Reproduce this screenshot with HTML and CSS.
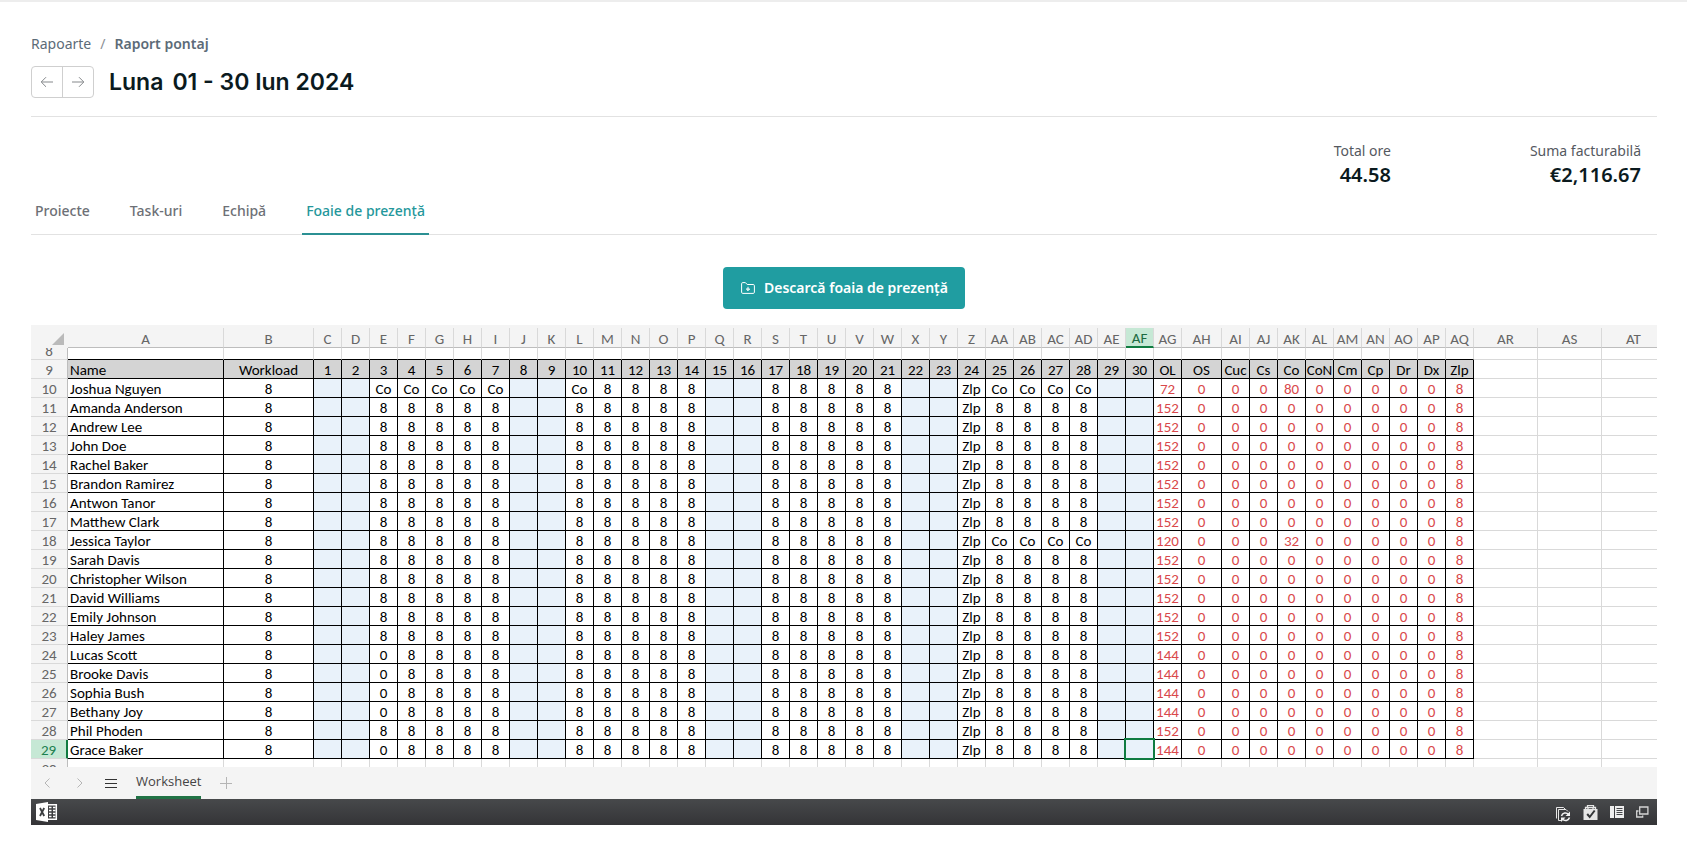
FILE: index.html
```html
<!DOCTYPE html>
<html lang="ro">
<head>
  <meta charset="utf-8">
  <meta name="viewport" content="width=device-width, initial-scale=1">
  <title>Raport pontaj</title>
  <link rel="stylesheet" href="styles.css">
</head>
<body>
  <main class="page">
    <header class="page-header">
      <nav class="breadcrumb" aria-label="Breadcrumb">
        <a href="#rapoarte">Rapoarte</a>
        <span class="breadcrumb-sep">/</span>
        <a class="breadcrumb-current" href="#pontaj">Raport pontaj</a>
      </nav>
      <div class="period">
        <div class="period-nav">
          <button type="button" aria-label="Luna precedentă">
            <svg width="14" height="12" viewBox="0 0 14 12"><path d="M13 6H1.5M6 1.2 1.2 6 6 10.8"/></svg>
          </button>
          <button type="button" aria-label="Luna următoare">
            <svg width="14" height="12" viewBox="0 0 14 12"><path d="M1 6h11.5M8 1.2 12.8 6 8 10.8"/></svg>
          </button>
        </div>
        <h1><span>Luna</span><span>01 - 30 Iun 2024</span></h1>
      </div>
    </header>

    <dl class="totals">
      <div class="total"><dt>Total ore</dt><dd>44.58</dd></div>
      <div class="total"><dt>Suma facturabilă</dt><dd>€2,116.67</dd></div>
    </dl>

    <nav class="tabs" aria-label="Secțiuni raport">
      <a href="#proiecte">Proiecte</a>
      <a href="#taskuri">Task-uri</a>
      <a href="#echipa">Echipă</a>
      <a class="active" href="#foaie" aria-current="page">Foaie de prezență</a>
    </nav>

    <div class="actions">
      <button type="button" class="download">
        <svg width="14" height="12" viewBox="0 0 14 12"><path d="M.6 10.2V1.8Q.6.6 1.8.6h2.6l1.8 1.9h6q1.2 0 1.2 1.2v6.5q0 1.2-1.2 1.2H1.8Q.6 11.400.6 10.200z"/><path d="M7 4.800v3.800M5.300 7 7 8.700 8.700 7z"/></svg>
        Descarcă foaia de prezență
      </button>
    </div>

    <section class="workbook" aria-label="Foaie de prezență">
      <div class="grid-view">
        <table class="sheet" id="sheet"></table>
      </div>
      <div class="sheet-bar">
        <button type="button" class="sheet-prev" aria-label="Foaia anterioară"><svg width="6" height="10" viewBox="0 0 6 10"><path d="M5.500.500 1 5l4.500 4.500"/></svg></button>
        <button type="button" class="sheet-next" aria-label="Foaia următoare"><svg width="6" height="10" viewBox="0 0 6 10"><path d="M.500.500 5 5 .500 9.500"/></svg></button>
        <button type="button" class="sheet-list" aria-label="Toate foile"><svg width="12" height="11" viewBox="0 0 12 11"><path d="M0 1.500h12M0 5.500h12M0 9.500h12"/></svg></button>
        <button type="button" class="sheet-tab">Worksheet</button>
        <button type="button" class="sheet-add" aria-label="Foaie nouă"><svg width="12" height="12" viewBox="0 0 12 12"><path d="M6.500 0v12M0 6.500h12"/></svg></button>
      </div>
      <footer class="status-bar">
        <a href="#excel" class="excel" aria-label="Excel">
          <svg width="22" height="20" viewBox="0 0 22 20"><path fill="#fff" d="M0 2 12 0v20L0 18z"/><path fill="none" stroke="#fff" stroke-width="1.500" d="M12 2.700h8.300v14.600H12"/><path stroke="#fff" stroke-width="1.500" d="M13 5.500h2.500m1.500 0h2.500M13 8.500h2.500m1.500 0h2.500M13 11.500h2.500m1.500 0h2.500M13 14.500h2.500m1.500 0h2.500"/><path fill="none" stroke="#3c3e40" stroke-width="1.800" d="m4 6 4.200 8M8.200 6 4 14"/></svg>
        </a>
        <div class="status-actions">
          <button type="button" aria-label="Actualizare"><svg width="15" height="19" viewBox="0 -4 15 19"><path fill="none" stroke="#e6e6e6" d="M.5 11.500V.500h7l2 2M5 13.500H2.500v-11h7.500l2 2"/><path fill="none" stroke="#f2f2f2" stroke-width="1.500" d="M5.500 9a4 4 0 0 1 7-1.500M13.500 10.500a4 4 0 0 1-7 1.500"/><path fill="#f2f2f2" d="M14 4.500V9H9.500zM5 15v-4.500h4.500z"/></svg></button>
          <button type="button" aria-label="Verificare"><svg width="15" height="15" viewBox="0 0 15 15"><path fill="#e6e6e6" d="M.5 4h14v11H.5z"/><path fill="none" stroke="#e6e6e6" stroke-width="1.300" d="M2.500 4V2.500h2V.7h6v1.800h2V4M5 4V2.700h5V4"/><path fill="none" stroke="#343638" stroke-width="2" d="m4.200 9 2.500 3 5-6.500"/></svg></button>
          <button type="button" aria-label="Panou"><svg width="14" height="12" viewBox="0 0 14 12"><path fill="#eee" d="M0 0h4v12H0zM5 0h9v12H5z"/><path stroke="#45474a" d="M6.500 2.500h6M6.500 4.500h6M6.500 6.500h6M6.500 8.500h6"/></svg></button>
          <button type="button" aria-label="Fereastră nouă"><svg width="13" height="12" viewBox="0 0 13 12"><path fill="none" stroke="#d5d5d5" stroke-width="1.300" d="M3.700 1h8.200v7H3.700zM2.500 5H.700v6h6V9.500"/></svg></button>
        </div>
      </footer>
    </section>
  </main>
  <script src="sheet.js"></script>
</body>
</html>
```

FILE: styles.css
```css
* {
  box-sizing: border-box;
}

body {
  margin: 0;
  border-top: 2px solid #ededed;
  background: #fff;
  color: #0b1a1e;
  font: 14px/20px "Noto Sans", sans-serif;
}

button {
  margin: 0;
  padding: 0;
  border: 0;
  background: none;
  color: inherit;
  font: inherit;
  cursor: pointer;
}

a {
  color: inherit;
  text-decoration: none;
}

svg {
  display: block;
}

.page {
  padding: 32px 30px 30px 31px;
}

.page-header {
  padding-bottom: 18px;
  border-bottom: 1px solid #e2e2e2;
}

.breadcrumb {
  display: flex;
  gap: 9px;
  color: #5c6b78;
}

.breadcrumb-sep {
  color: #8b8f94;
}

.breadcrumb-current {
  font-weight: 600;
}

.period {
  display: flex;
  align-items: center;
  gap: 15px;
  margin-top: 11px;
}

.period-nav {
  display: flex;
  width: 63px;
  border: 1px solid #cfcfcf;
  border-radius: 4px;
}

.period-nav button {
  display: grid;
  flex: 1;
  place-items: center;
  height: 30px;
}

.period-nav button + button {
  border-left: 1px solid #cfcfcf;
}

.period-nav svg {
  fill: none;
  stroke: #85888b;
}

h1 {
  display: flex;
  gap: 9px;
  margin: 0;
  padding-top: 1px;
  font: 600 23px/32px Inter, sans-serif;
}

.totals {
  display: flex;
  justify-content: flex-end;
  gap: 139px;
  margin: 24px 16px 0;
  text-align: right;
}

.totals dt {
  color: #55595f;
}

.totals dd {
  margin: 2px 0 0;
  font-size: 20px;
  font-weight: 600;
  line-height: 24px;
}

.tabs {
  display: flex;
  gap: 32px;
  margin-top: 10px;
  border-bottom: 1px solid #e2e2e2;
  color: #6d7076;
  font-weight: 500;
}

.tabs a {
  margin-bottom: -1px;
  padding: 4px 4px 12px;
  border-bottom: 2px solid transparent;
}

.tabs .active {
  border-color: #2b9093;
  color: #24979b;
}

.actions {
  display: flex;
  justify-content: center;
  padding: 32px 0 16px;
}

.download {
  display: flex;
  align-items: center;
  gap: 9px;
  padding: 11px 17px 11px 18px;
  border-radius: 4px;
  background: #209da1;
  color: #fff;
  font-weight: 600;
}

.download svg {
  fill: none;
  stroke: #fff;
}

.grid-view {
  overflow: hidden;
  border-top: 3px solid #f4f4f4;
}

.sheet {
  width: 1635px;
  border-collapse: separate;
  border-spacing: 0;
  table-layout: fixed;
  color: #000;
  font: 15px/15px Carlito, Lato, sans-serif;
}

.col-head { width: 37px; }
.col-name { width: 156px; }
.col-load { width: 90px; }
.col-day { width: 28px; }
.col-os { width: 40px; }
.col-free { width: 64px; }

.sheet th,
.sheet td {
  position: relative;
  height: 19px;
  padding: 3px 0 0;
  border-right: 1px solid #d9d9d9;
  border-bottom: 1px solid #d9d9d9;
  font-weight: 400;
  text-align: center;
  white-space: nowrap;
}

.sheet th {
  background: #f4f4f4;
  color: #666;
}

.sheet thead th {
  height: 20px;
  border-bottom-color: #bdbdbd;
}

.sheet thead .corner {
  border-color: #f4f4f4;
}

.corner svg {
  margin-left: auto;
  margin-right: 3px;
  fill: #bababa;
}

.sheet tbody th {
  border-right-color: #bdbdbd;
}

.sheet thead .picked {
  border-bottom: 2px solid #107c41;
  background: #c6e8d5;
  color: #1d6b42;
}

.sheet tbody .picked {
  border-right: 2px solid #107c41;
  background: #c6e8d5;
  color: #1d8050;
}

.sheet .cut-top > * {
  height: 12px;
  padding: 0;
}

.sheet .cut-bottom > * {
  height: 8px;
  padding: 0;
  border-bottom: 0;
}

.cut {
  display: flex;
  justify-content: center;
  height: 11px;
  overflow: hidden;
}

.cut-top .cut {
  align-items: flex-end;
}

.cut-bottom .cut {
  align-items: flex-start;
  height: 8px;
  padding-top: 3px;
}

.sheet .boxed {
  border-color: #000;
}

.sheet .edge td:not(.free) {
  border-bottom-color: #000;
}

.sheet .title {
  background: #d4d4d4;
}

.sheet .name {
  padding-left: 2px;
  text-align: left;
}

.sheet .weekend {
  background: #e9f2fa;
}

.sheet .sum {
  color: #d9484b;
}

.sheet .cursor::after {
  content: "";
  position: absolute;
  z-index: 1;
  inset: -2px;
  border: 2px solid #107c41;
}

.sheet-bar {
  display: flex;
  align-items: stretch;
  height: 32px;
  padding-left: 13px;
  background: #f4f4f4;
}

.sheet-bar svg {
  fill: none;
  stroke: #b5b5b5;
}

.sheet-bar .sheet-next {
  margin-left: 27px;
}

.sheet-bar .sheet-list {
  margin: 0 19px 0 22px;
}

.sheet-bar .sheet-list svg {
  stroke: #333;
}

.sheet-tab {
  padding-bottom: 1px;
  border-bottom: 3px solid #217346;
  color: #444;
  font: 500 13px/20px "Open Sans", sans-serif;
}

.sheet-add {
  margin-left: 19px;
}

.status-bar {
  display: flex;
  align-items: center;
  justify-content: space-between;
  height: 26px;
  padding: 0 8px 0 5px;
  background: linear-gradient(#47494b, #343437);
}

.status-actions {
  display: flex;
  align-items: center;
  gap: 12px;
}
```

FILE: sheet.js
```js
const COLUMNS = 44;
const WEEKENDS = [1, 2, 8, 9, 15, 16, 22, 23, 29, 30];
const SUMS = ["OL", "OS", "Cuc", "Cs", "Co", "CoN", "Cm", "Cp", "Dr", "Dx", "Zlp"];
const ACTIVE = { column: "AF", row: 29 };

const people = [
  { name: "Joshua Nguyen", total: 72, leave: [3, 4, 5, 6, 7, 10, 25, 26, 27, 28] },
  { name: "Amanda Anderson", total: 152 },
  { name: "Andrew Lee", total: 152 },
  { name: "John Doe", total: 152 },
  { name: "Rachel Baker", total: 152 },
  { name: "Brandon Ramirez", total: 152 },
  { name: "Antwon Tanor", total: 152 },
  { name: "Matthew Clark", total: 152 },
  { name: "Jessica Taylor", total: 120, leave: [25, 26, 27, 28] },
  { name: "Sarah Davis", total: 152 },
  { name: "Christopher Wilson", total: 152 },
  { name: "David Williams", total: 152 },
  { name: "Emily Johnson", total: 152 },
  { name: "Haley James", total: 152 },
  { name: "Lucas Scott", total: 144, missed: [3] },
  { name: "Brooke Davis", total: 144, missed: [3] },
  { name: "Sophia Bush", total: 144, missed: [3] },
  { name: "Bethany Joy", total: 144, missed: [3] },
  { name: "Phil Phoden", total: 152 },
  { name: "Grace Baker", total: 144, missed: [3] }
];

const days = Array.from({ length: 30 }, (_, i) => i + 1);

function columnName(i) {
  const letter = String.fromCharCode(65 + (i % 26));
  return i < 26 ? letter : "A" + letter;
}

const cell = (text, cls) => `<td class="${cls}">${text}</td>`;
const freeCells = cell("", "free").repeat(3);
const blankCells = cell("", "").repeat(COLUMNS - 1) + freeCells;

function dayValue(person, day) {
  if (WEEKENDS.includes(day)) return "";
  if (day === 24) return "Zlp";
  if ((person.leave || []).includes(day)) return "Co";
  return (person.missed || []).includes(day) ? 0 : 8;
}

function sumValue(person, label) {
  if (label === "OL") return person.total;
  if (label === "Co") return (person.leave || []).length * 8;
  return label === "Zlp" ? 8 : 0;
}

function personRow(person, i) {
  const row = i + 10;
  const active = row === ACTIVE.row;
  const dayCells = days.map(day => {
    const cursor = active && columnName(day + 1) === ACTIVE.column;
    const cls = "boxed" + (WEEKENDS.includes(day) ? " weekend" : "") + (cursor ? " cursor" : "");
    return cell(dayValue(person, day), cls);
  }).join("");
  const sumCells = SUMS.map(label => cell(sumValue(person, label), "boxed sum")).join("");
  return `<tr><th scope="row" class="${active ? "picked" : ""}">${row}</th>` +
    cell(person.name, "boxed name") + cell(8, "boxed") + dayCells + sumCells + freeCells + "</tr>";
}

const widths = ["head", "name", "load", ...days.map(() => "day"),
  ...SUMS.map(label => (label === "OS" ? "os" : "day")), "free", "free", "free"];

const letters = Array.from({ length: 46 }, (_, i) => columnName(i))
  .map(name => `<th scope="col" class="${name === ACTIVE.column ? "picked" : ""}">${name}</th>`).join("");

const titles = cell("Name", "boxed title name") +
  ["Workload", ...days, ...SUMS].map(text => cell(text, "boxed title")).join("");

document.getElementById("sheet").innerHTML =
  "<colgroup>" + widths.map(w => `<col class="col-${w}">`).join("") + "</colgroup>" +
  '<thead><tr><th class="corner"><svg width="12" height="12" viewBox="0 0 12 12"><path d="M12 0v12H0z"/></svg></th>' +
  letters + "</tr></thead><tbody>" +
  '<tr class="cut-top edge"><th scope="row"><div class="cut">8</div></th>' + blankCells + "</tr>" +
  '<tr><th scope="row">9</th>' + titles + freeCells + "</tr>" +
  people.map(personRow).join("") +
  '<tr class="cut-bottom"><th scope="row"><div class="cut">30</div></th>' + blankCells + "</tr>" +
  "</tbody>";
```
